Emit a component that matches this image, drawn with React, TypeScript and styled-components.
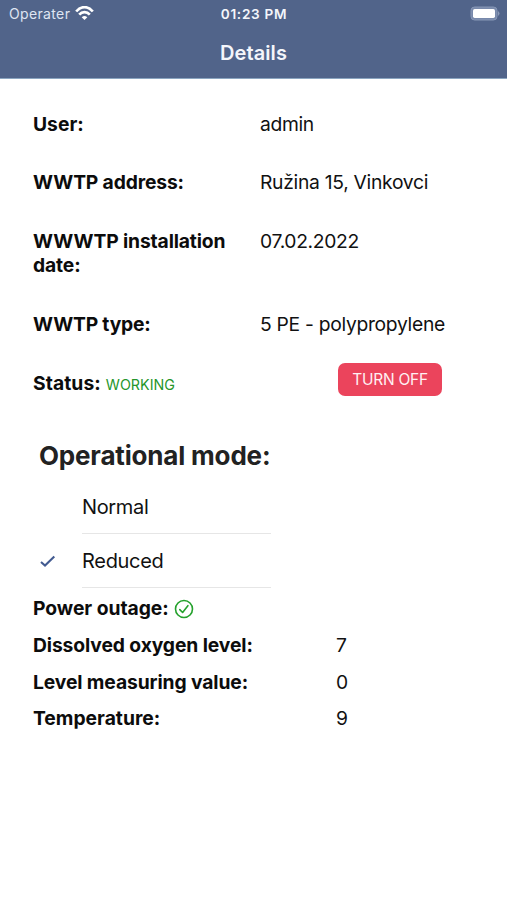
import React from "react";
import styled, { createGlobalStyle } from "styled-components";

const GlobalStyle = createGlobalStyle`
  * { box-sizing: border-box; }
  body {
    margin: 0;
    background: #fff;
    color: #111;
    font-family: Inter, "Liberation Sans", sans-serif;
    font-size: 19.3px;
    line-height: 24.5px;
  }
`;

const Screen = styled.div`
  width: 507px;
  height: 900px;
  overflow: hidden;
  background: #fff;
`;

const Header = styled.header`
  height: 79px;
  background: #51648a;
  border-bottom: 1px solid #8ba5c0;
  color: #f4f6fb;
`;

const StatusBar = styled.div`
  display: grid;
  grid-template-columns: 1fr auto 1fr;
  align-items: center;
  height: 27px;
  padding: 0 7px 0 9px;
  font-size: 14px;
`;

const Carrier = styled.div`
  display: flex;
  align-items: center;
  gap: 5px;
  padding-top: 1px;
  color: #dfe5f2;

  svg {
    margin-top: -1px;
  }
`;

const Clock = styled.div`
  padding: 1px 1px 0 0;
  font-weight: 600;
  font-size: 13.6px;
`;

const BatterySlot = styled.div`
  display: flex;
  justify-content: flex-end;
`;

const Title = styled.h1`
  margin: 0;
  padding-top: 14px;
  text-align: center;
  font-size: 20px;
  font-weight: 600;
  line-height: 25px;
`;

const Text = styled.span<{ $track?: number }>`
  letter-spacing: ${(p) => p.$track ?? 0}px;
  white-space: nowrap;
`;

const Label = styled(Text)`
  font-weight: 700;
  color: #0c0c0c;
`;

const Details = styled.section`
  display: flex;
  flex-direction: column;
  gap: 34px;
  padding: 32.5px 33px 0;
`;

const DetailRow = styled.div`
  display: grid;
  grid-template-columns: 227px 1fr;
`;

const StatusRow = styled(DetailRow)`
  padding-top: 0.7px;
`;

const Status = styled.div`
  white-space: nowrap;
`;

const Working = styled(Text)`
  margin-left: 5px;
  font-size: 14.3px;
  color: #25962b;
`;

const TurnOff = styled.button`
  justify-self: start;
  width: 104px;
  height: 33px;
  margin: -8px 0 -0.5px 78px;
  padding: 0;
  border: 0;
  border-radius: 7px;
  background: #eb445c;
  color: #fff0f2;
  font: 400 15.5px/33px Inter, "Liberation Sans", sans-serif;
`;

const ModeTitle = styled.h2`
  margin: 42.8px 0 0 39px;
  font-size: 26px;
  font-weight: 700;
  line-height: 32px;
  color: #222;
`;

const Modes = styled.ul`
  width: 232px;
  margin: 8px 0 0 39px;
  padding: 0;
  list-style: none;
`;

const Mode = styled.li`
  display: grid;
  grid-template-columns: 43px 1fr;
  height: 54px;
  align-items: center;
`;

const ModeName = styled.div`
  height: 54px;
  border-bottom: 1px solid #e6e6e6;
  font-size: 20px;
  line-height: 54px;
`;

const Readings = styled.section`
  display: flex;
  flex-direction: column;
  gap: 12.1px;
  padding: 8.5px 33px 0;
`;

const Reading = styled.div`
  display: grid;
  grid-template-columns: 303px 1fr;
`;

const Power = styled.div`
  display: flex;
  align-items: center;
  gap: 5.5px;
`;

const Wifi = () => (
  <svg width="19" height="15" viewBox="0 0 19 15" fill="none" stroke="#fff" strokeWidth="2.7">
    <path d="M1.2 5.5C6-.3 13-.3 17.8 5.5" />
    <path d="M4.2 8.7c3-3.4 7.6-3.4 10.6 0" />
    <path d="M6.7 11.2Q9.5 8.8 12.3 11.2L9.5 14Z" fill="#fff" stroke="none" />
  </svg>
);

const Battery = () => (
  <svg width="31" height="15" viewBox="0 0 31 15">
    <rect x="2" y="1" width="26" height="13" rx="3.5" fill="#7889ab" stroke="#8797b6" />
    <rect x="4" y="3" width="22" height="9" rx="1.7" fill="#fff" />
    <path d="M29 5q3 2.5 0 5z" fill="#8b9ab8" />
  </svg>
);

const Check = () => (
  <svg width="17" height="14" viewBox="0 0 17 14" fill="none" stroke="#435b91" strokeWidth="2.1">
    <path d="M2 8 6 11.5 15.3 2.6" />
  </svg>
);

const CircleCheck = () => (
  <svg width="20" height="20" viewBox="0 0 20 20" fill="none" stroke="#24a12c" strokeWidth="1.6">
    <circle cx="10" cy="10" r="8.5" />
    <path d="m5.8 10.6 2.8 2.9 5.3-6.8" strokeLinecap="round" strokeLinejoin="round" />
  </svg>
);

export default function App() {
  return (
    <Screen>
      <GlobalStyle />
      <Header>
        <StatusBar>
          <Carrier><Text $track={0.35}>Operater</Text><Wifi /></Carrier>
          <Clock><Text $track={0.7}>01:23 PM</Text></Clock>
          <BatterySlot><Battery /></BatterySlot>
        </StatusBar>
        <Title><Text $track={0.1}>Details</Text></Title>
      </Header>
      <Details>
        <DetailRow><Label>User:</Label><Text $track={-0.35}>admin</Text></DetailRow>
        <DetailRow><Label $track={-0.15}>WWTP address:</Label><Text $track={-0.29}>Ružina 15, Vinkovci</Text></DetailRow>
        <DetailRow>
          <Label $track={-0.14}>WWWTP installation<br />date:</Label>
          <Text $track={-0.33}>07.02.2022</Text>
        </DetailRow>
        <DetailRow><Label $track={-0.2}>WWTP type:</Label><Text $track={-0.3}>5 PE - polypropylene</Text></DetailRow>
        <StatusRow>
          <Status><Label $track={0.08}>Status:</Label><Working>WORKING</Working></Status>
          <TurnOff><Text $track={-0.25}>TURN OFF</Text></TurnOff>
        </StatusRow>
      </Details>
      <ModeTitle><Text $track={-0.18}>Operational mode:</Text></ModeTitle>
      <Modes>
        <Mode><span /><ModeName><Text $track={-0.35}>Normal</Text></ModeName></Mode>
        <Mode><Check /><ModeName><Text $track={-0.3}>Reduced</Text></ModeName></Mode>
      </Modes>
      <Readings>
        <Power><Label $track={-0.04}>Power outage:</Label><CircleCheck /></Power>
        <Reading><Label $track={-0.11}>Dissolved oxygen level:</Label><Text>7</Text></Reading>
        <Reading><Label $track={-0.11}>Level measuring value:</Label><Text>0</Text></Reading>
        <Reading><Label>Temperature:</Label><Text>9</Text></Reading>
      </Readings>
    </Screen>
  );
}
